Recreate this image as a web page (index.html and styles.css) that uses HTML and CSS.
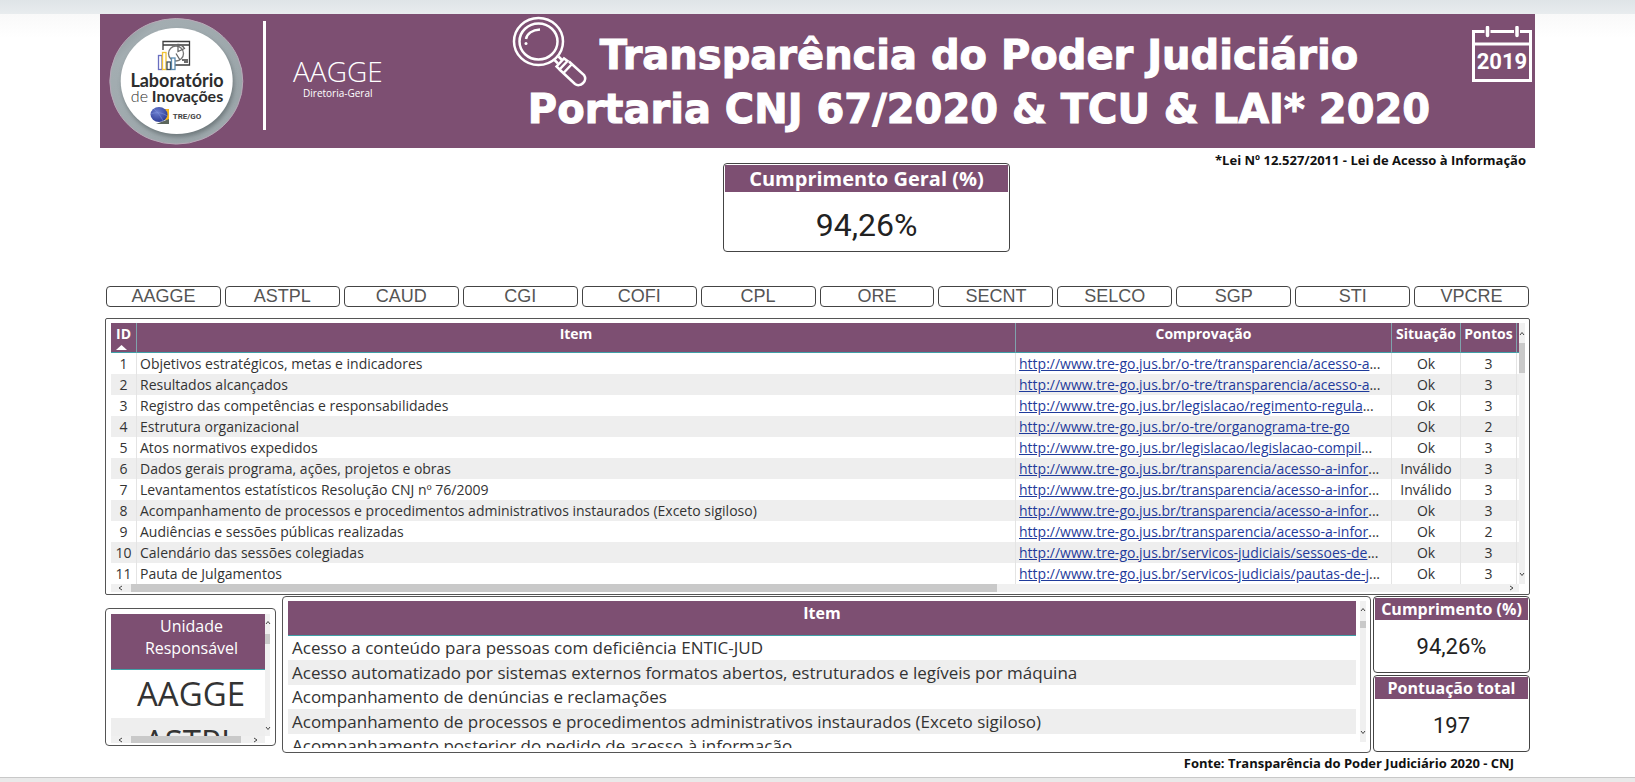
FILE: index.html
```html
<!DOCTYPE html>
<html lang="pt-BR">
<head>
<meta charset="utf-8">
<title>Transparência do Poder Judiciário</title>
<link rel="stylesheet" href="styles.css">
</head>
<body>
<div class="topbar"></div>
<main class="report">
  <header class="banner">
    <div class="brand">
      <svg class="logo" viewBox="0 0 144 134" role="img" aria-label="Laboratório de Inovações TRE/GO">
        <defs>
          <linearGradient id="ring" x1="0" y1="0" x2="1" y2="1"><stop offset="0" stop-color="#7d878b"/><stop offset=".2" stop-color="#a3adb1"/><stop offset=".8" stop-color="#9ba5a9"/><stop offset="1" stop-color="#aab3b7"/></linearGradient>
          <radialGradient id="globe" cx=".4" cy=".35" r=".7"><stop offset="0" stop-color="#6c7fd0"/><stop offset="1" stop-color="#2c3a92"/></radialGradient>
          <filter id="soft" x="-10%" y="-10%" width="120%" height="125%"><feGaussianBlur stdDeviation="2"/></filter>
        </defs>
        <ellipse cx="71.3" cy="67.3" rx="66.5" ry="62.8" fill="url(#ring)" stroke="#b9a9b8" stroke-width="1"/>
        <ellipse cx="73" cy="70" rx="56" ry="53" fill="#5d676b" opacity=".7" filter="url(#soft)"/>
        <ellipse cx="71.7" cy="67" rx="56" ry="53" fill="#fff"/>
        <g fill="none" stroke="#3c3c3c" stroke-width="1.3">
          <path d="M58 36V27.500H84.500V51H69M58 31H84.500M79 48H83M77 46H83"/>
          <circle cx="71" cy="39.500" r="7.500" stroke="#777"/>
          <path d="M73 37.500V30.500A8 8 0 0 1 79.500 34.500ZM71 39.500L75 46" stroke="#666"/>
        </g>
        <g fill="#fff" stroke-width="1.300">
          <rect x="53.500" y="41.500" width="3.500" height="14" stroke="#6a6fc0"/>
          <rect x="57.500" y="38.500" width="3.500" height="17" stroke="#f2c335"/>
          <rect x="62" y="48" width="3.500" height="7.500" stroke="#3f4f5c"/>
          <rect x="66.500" y="44" width="3.500" height="11.500" stroke="#5b8bb0"/>
        </g>
        <text x="72" y="73" class="logo-name">Laboratório</text>
        <text x="72" y="88" class="logo-sub"><tspan class="logo-thin">de</tspan> Inovações</text>
        <path d="M55 95H64V107L55 104Z" fill="#f3b61f"/>
        <path d="M51 110L64 105V110Z" fill="#5c665c"/>
        <ellipse cx="54" cy="100.500" rx="8.500" ry="7.500" fill="url(#globe)"/>
        <path d="M46 100C50 98 57 98 62 102M49 95C52 97 57 104 58 107" fill="none" stroke="#7f92da" stroke-width=".6"/>
        <text x="82" y="105" class="logo-org">TRE/GO</text>
      </svg>
      <div class="divider"></div>
      <div class="unit"><span class="unit-name">AAGGE</span><span class="unit-parent">Diretoria-Geral</span></div>
    </div>
    <div class="title">
      <svg class="lens" viewBox="0 0 90 84" aria-hidden="true">
        <g fill="none" stroke="#fff" stroke-width="2.500">
          <ellipse cx="32.500" cy="29.500" rx="24.500" ry="23.500"/>
          <ellipse cx="32.500" cy="29.500" rx="19" ry="18"/>
          <path d="M20 27C21 22 26 18 34 17.500"/>
          <path d="M48.500 48L52 51.500M52.500 44.500L56 48"/>
          <path d="M50.500 54.500L58 46.500L61.500 49L53.500 57.500Z"/>
          <path d="M53.500 57.500L69 72C74 76 82 69 78 63L63 49.500M57.500 61L66 52"/>
        </g>
        <circle cx="20" cy="31.500" r="1.500" fill="#fff"/>
      </svg>
      <h1>Transparência do Poder Judiciário<br>Portaria CNJ 67/2020 &amp; TCU &amp; LAI* 2020</h1>
    </div>
    <svg class="calendar" viewBox="0 0 60 56" role="img" aria-label="2019">
      <path d="M1.500 5.500H58.500V54.500H1.500Z" fill="none" stroke="#fff" stroke-width="3"/>
      <path d="M1 18H59" stroke="#fff" stroke-width="3"/>
      <path d="M15.500 1.500V9.500M45 1.500V9.500" stroke="#7d4f72" stroke-width="6"/>
      <path d="M15.500 1.500V9.500M45 1.500V9.500" stroke="#fff" stroke-width="3.500" stroke-linecap="round"/>
      <text x="30" y="43" class="year">2019</text>
    </svg>
  </header>

  <section class="summary">
    <article class="card overall"><h2>Cumprimento Geral (%)</h2><p>94,26%</p></article>
    <p class="law">*Lei Nº 12.527/2011 - Lei de Acesso à Informação</p>
  </section>

  <nav class="filters">
    <button>AAGGE</button><button>ASTPL</button><button>CAUD</button><button>CGI</button><button>COFI</button><button>CPL</button><button>ORE</button><button>SECNT</button><button>SELCO</button><button>SGP</button><button>STI</button><button>VPCRE</button>
  </nav>

  <section class="panel items">
    <table>
      <colgroup><col class="c-id"><col><col class="c-link"><col class="c-status"><col class="c-points"><col class="c-end"></colgroup>
      <thead><tr><th>ID<svg class="sort" viewBox="0 0 11 5" aria-hidden="true"><path d="M0 5L5.500 0L11 5Z" fill="#fff"/></svg></th><th>Item</th><th>Comprovação</th><th>Situação</th><th>Pontos</th><th></th></tr></thead>
      <tbody>
        <tr><td>1</td><td>Objetivos estratégicos, metas e indicadores</td><td><a href="#">http://www.tre-go.jus.br/o-tre/transparencia/acesso-a</a>...</td><td>Ok</td><td>3</td><td></td></tr>
        <tr><td>2</td><td>Resultados alcançados</td><td><a href="#">http://www.tre-go.jus.br/o-tre/transparencia/acesso-a</a>...</td><td>Ok</td><td>3</td><td></td></tr>
        <tr><td>3</td><td>Registro das competências e responsabilidades</td><td><a href="#">http://www.tre-go.jus.br/legislacao/regimento-regula</a>...</td><td>Ok</td><td>3</td><td></td></tr>
        <tr><td>4</td><td>Estrutura organizacional</td><td><a href="#">http://www.tre-go.jus.br/o-tre/organograma-tre-go</a></td><td>Ok</td><td>2</td><td></td></tr>
        <tr><td>5</td><td>Atos normativos expedidos</td><td><a href="#">http://www.tre-go.jus.br/legislacao/legislacao-compil</a>...</td><td>Ok</td><td>3</td><td></td></tr>
        <tr><td>6</td><td>Dados gerais programa, ações, projetos e obras</td><td><a href="#">http://www.tre-go.jus.br/transparencia/acesso-a-infor</a>...</td><td>Inválido</td><td>3</td><td></td></tr>
        <tr><td>7</td><td>Levantamentos estatísticos Resolução CNJ nº 76/2009</td><td><a href="#">http://www.tre-go.jus.br/transparencia/acesso-a-infor</a>...</td><td>Inválido</td><td>3</td><td></td></tr>
        <tr><td>8</td><td>Acompanhamento de processos e procedimentos administrativos instaurados (Exceto sigiloso)</td><td><a href="#">http://www.tre-go.jus.br/transparencia/acesso-a-infor</a>...</td><td>Ok</td><td>3</td><td></td></tr>
        <tr><td>9</td><td>Audiências e sessões públicas realizadas</td><td><a href="#">http://www.tre-go.jus.br/transparencia/acesso-a-infor</a>...</td><td>Ok</td><td>2</td><td></td></tr>
        <tr><td>10</td><td>Calendário das sessões colegiadas</td><td><a href="#">http://www.tre-go.jus.br/servicos-judiciais/sessoes-de</a>...</td><td>Ok</td><td>3</td><td></td></tr>
        <tr><td>11</td><td>Pauta de Julgamentos</td><td><a href="#">http://www.tre-go.jus.br/servicos-judiciais/pautas-de-j</a>...</td><td>Ok</td><td>3</td><td></td></tr>
      </tbody>
    </table>
    <div class="vbar"><svg viewBox="0 0 6 20"><path d="M1 12L3 9.500L5 12"/></svg><i class="thumb"></i><svg class="last" viewBox="0 0 6 20"><path d="M1 9L3 11.500L5 9"/></svg></div>
    <div class="hbar"><svg viewBox="0 0 20 8"><path d="M11 2L8 4L11 6"/></svg><i class="thumb"></i><svg class="last" viewBox="0 0 20 8"><path d="M11 2L14 4L11 6"/></svg></div>
  </section>

  <section class="bottom">
    <div class="panel units">
      <div class="clip">
        <table>
          <thead><tr><th>Unidade Responsável</th></tr></thead>
          <tbody><tr><td>AAGGE</td></tr><tr><td>ASTPL</td></tr></tbody>
        </table>
      </div>
      <div class="vbar"><svg viewBox="0 0 6 20"><path d="M1 10L3 7.500L5 10"/></svg><i class="thumb"></i><svg class="last" viewBox="0 0 6 20"><path d="M1 11L3 13.500L5 11"/></svg></div>
      <div class="hbar"><svg viewBox="0 0 20 8"><path d="M11 2L8 4L11 6"/></svg><i class="thumb"></i><svg class="last" viewBox="0 0 20 8"><path d="M9 2L12 4L9 6"/></svg></div>
    </div>
    <div class="panel names">
      <div class="clip">
        <table>
          <thead><tr><th>Item</th></tr></thead>
          <tbody>
            <tr><td>Acesso a conteúdo para pessoas com deficiência ENTIC-JUD</td></tr>
            <tr><td>Acesso automatizado por sistemas externos formatos abertos, estruturados e legíveis por máquina</td></tr>
            <tr><td>Acompanhamento de denúncias e reclamações</td></tr>
            <tr><td>Acompanhamento de processos e procedimentos administrativos instaurados (Exceto sigiloso)</td></tr>
            <tr><td>Acompanhamento posterior do pedido de acesso à informação</td></tr>
          </tbody>
        </table>
      </div>
      <div class="vbar"><svg viewBox="0 0 6 20"><path d="M1 10L3 7.500L5 10"/></svg><i class="thumb"></i><svg class="last" viewBox="0 0 6 20"><path d="M1 9L3 11.500L5 9"/></svg></div>
    </div>
    <div class="totals">
      <article class="card"><h2>Cumprimento (%)</h2><p>94,26%</p></article>
      <article class="card"><h2>Pontuação total</h2><p>197</p></article>
    </div>
  </section>
  <p class="source">Fonte: Transparência do Poder Judiciário 2020 - CNJ</p>
</main>
<footer class="foot"></footer>
</body>
</html>
```
FILE: styles.css
```css
* { box-sizing: border-box; }
body {
  margin: 0;
  min-height: 100vh;
  display: flex;
  flex-direction: column;
  background: #fff;
  color: #333;
  font-family: "Open Sans", "Noto Sans", sans-serif;
  font-size: 14px;
}
h1, h2, p { margin: 0; }
.topbar { height: 14px; background: linear-gradient(#dfe4e7, #e8ecee); }
.report { padding: 0 100px; background: linear-gradient(#f9f9f9, #fff 24px); }

/* Banner */
.banner {
  display: grid;
  grid-template-columns: 386px 1fr 63px;
  height: 134px;
  background: #7d4f72;
  color: #fff;
}
.brand { display: flex; align-items: flex-start; padding-left: 5px; }
.logo { width: 144px; height: 134px; }
.logo text { text-anchor: middle; font-family: Lato, sans-serif; font-weight: 700; fill: #2d2d2d; }
.logo .logo-name { font-size: 18px; }
.logo .logo-sub { font-size: 16px; }
.logo .logo-thin { font-weight: 300; }
.logo .logo-org { font-size: 8px; font-family: Roboto, sans-serif; fill: #444; }
.divider { width: 3px; height: 109px; margin: 7px 27px 0 14px; background: #fff; }
.unit { display: flex; flex-direction: column; align-items: center; padding-top: 41px; }
.unit-name { font-size: 28px; font-weight: 300; line-height: 32px; }
.unit-parent { font-size: 10px; font-weight: 500; line-height: 12px; }
.title { position: relative; padding-top: 14px; }
.title h1 {
  font-family: "DejaVu Sans", sans-serif;
  font-size: 40px;
  font-weight: 700;
  line-height: 54px;
  text-align: center;
  white-space: nowrap;
  -webkit-text-stroke: 1px #fff;
}
.lens { position: absolute; left: 20px; top: -2px; width: 90px; height: 84px; }
.calendar { width: 60px; height: 56px; margin-top: 12px; }
.year { font: 700 22px Roboto, sans-serif; fill: #fff; text-anchor: middle; }

/* Cards */
.card { border: 1px solid #444; border-radius: 4px; padding: 1px; background: #fff; text-align: center; }
.card h2 { background: #7d4f72; color: #fff; font-size: 16px; line-height: 22px; }
.card p { padding-top: 3px; font-family: Roboto, sans-serif; color: #222; font-size: 22px; line-height: 48px; }
.summary { display: grid; grid-template-columns: 623fr 287px 525fr; height: 138px; align-items: start; }
.overall { grid-column: 2; margin-top: 15px; }
.overall h2 { font-size: 20px; line-height: 27px; }
.overall p { padding-top: 8px; font-size: 32px; line-height: 50px; }
.law { padding-right: 9px; text-align: right; font-size: 13px; font-weight: 700; line-height: 24px; color: #111; }

/* Filter buttons */
.filters { display: flex; gap: 4px; padding: 0 6px; margin-bottom: 11px; }
.filters button {
  flex: 1 1 0;
  min-width: 0;
  height: 21px;
  padding: 0;
  border: 1px solid #444;
  border-radius: 4px;
  background: #fff;
  color: #555;
  font: 18px/19px "Liberation Sans", sans-serif;
}

/* Tables */
table { width: 100%; border-collapse: separate; border-spacing: 0; table-layout: fixed; }
th { background: #7d4f72; color: #fff; border-bottom: 1px solid #3fa0a8; vertical-align: top; }
td, th { padding: 0; white-space: nowrap; }
tbody tr:nth-child(even) { background: #eee; }
.panel { border: 1px solid #555; border-radius: 4px; background: #fff; display: grid; }
.items {
  margin: 0 5px;
  padding: 4px 4px 2px 5px;
  grid-template-columns: 1fr 6px;
  grid-template-rows: 261px 8px;
  border-radius: 2px;
}
.items th { height: 30px; font-size: 14px; line-height: 22px; border-right: 1px solid #7fa3ac; }
.items td { height: 21px; line-height: 21px; border-right: 1px solid #e4e4e4; padding-left: 3px; }
.items th:last-child, .items td:last-child { border-right: 0; }
.items td:nth-child(1), .items td:nth-child(4), .items td:nth-child(5) { text-align: center; padding: 0; }
.c-id { width: 26px; }
.c-link { width: 376px; }
.c-status { width: 69px; }
.c-points { width: 56px; }
.c-end { width: 2px; }
.items a { color: #1f3b9b; }
.sort { display: block; width: 11px; height: 5px; margin: 0 0 0 5px; }

/* Scroll bars */
.vbar, .hbar { display: flex; background: #f0f0f0; }
.vbar { flex-direction: column; }
.vbar svg { width: 6px; height: 20px; flex: none; }
.hbar svg { width: 20px; height: 8px; flex: none; }
.vbar path, .hbar path { fill: none; stroke: #444; stroke-width: 1; }
.vbar .last { margin-top: auto; }
.hbar .last { margin-left: auto; }
.thumb { background: #c9c9c9; }
.items .vbar .thumb { height: 30px; }
.items .hbar .thumb { width: 61.5%; }

/* Lower row */
.bottom { display: grid; grid-template-columns: 171px 1fr 157px; padding: 0 5px; margin-top: 1px; }
.units {
  height: 138px;
  margin: 12px 0 0;
  padding: 5px 5px 3px;
  grid-template-columns: 1fr 5px;
  grid-template-rows: 122px 7px;
}
.clip { overflow: hidden; }
.units .clip { height: 122px; }
.units th { height: 56px; padding: 1px 20px 0 27px; font-size: 16px; font-weight: 400; line-height: 22px; white-space: normal; }
.units td { height: 46px; padding-left: 6px; font-size: 33px; line-height: 48px; text-align: center; }
.units .vbar .thumb { height: 10px; }
.units .hbar .thumb { width: 110px; }
.names { margin: 0 2px 0 6px; padding: 4px 4px 5px 5px; height: 157px; grid-template-columns: 1fr 6px; column-gap: 4px; }
.names .clip { height: 147px; }
.names th { height: 35px; font-size: 16px; line-height: 24px; }
.names td { height: 24px; padding-left: 4px; font-size: 17px; line-height: 24px; }
.names tr:nth-child(even) td { height: 25px; }
.names .vbar { height: 141px; }
.names .vbar .thumb { height: 7px; }
.totals { display: grid; gap: 2px; grid-template-rows: 77px 77px; }
.source { padding-right: 21px; text-align: right; font-size: 13px; font-weight: 700; line-height: 21px; margin-bottom: 3px; color: #111; }
.foot { flex: 1; border-top: 1px solid #c8c8c8; background: #e9e9e9; }
```
